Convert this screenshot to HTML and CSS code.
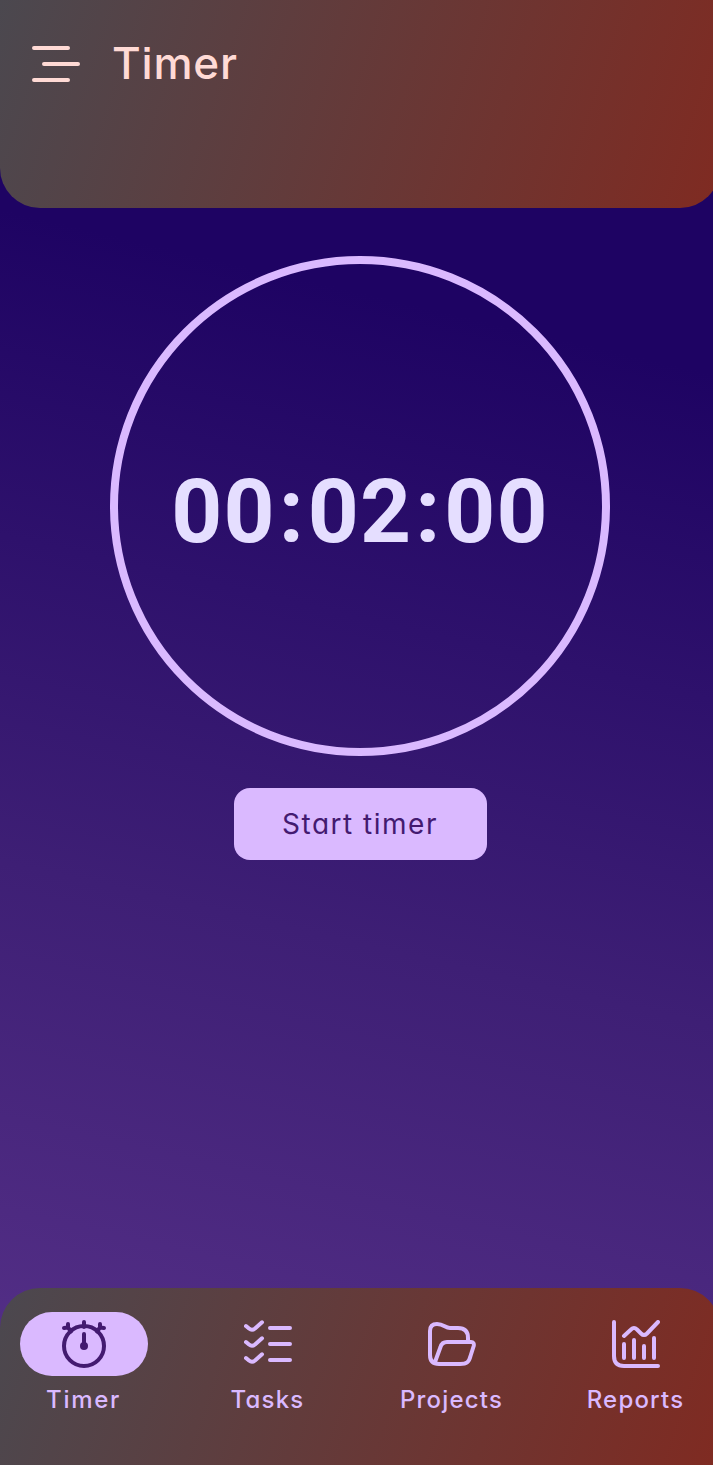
FILE: index.html
```html
<!DOCTYPE html>
<html lang="en">
<head>
<meta charset="utf-8">
<title>Timer</title>
<link rel="stylesheet" href="styles.css">
</head>
<body>
<div class="screen">
  <header class="header">
    <svg class="menu" width="48" height="48" viewBox="0 0 48 48"><path d="M2 8H36M12 24H46M2 40H36"/></svg>
    <h1 class="title">Timer</h1>
  </header>
  <main class="main">
    <div class="dial"><div class="time">00<span class="colon">:</span>02<span class="colon">:</span>00</div></div>
    <button class="start">Start timer</button>
  </main>
  <nav class="nav">
    <a class="item">
      <span class="pill active"><svg class="icon" viewBox="0 0 48 48"><circle cx="24" cy="26" r="20"/><path d="M24 2V7M24 14V26M4 8L8 7.500M8 4V7.500L11 11.500M44 8L40 7.500M40 4V7.500L37 11.500"/><circle class="dot" cx="24" cy="26" r="4"/></svg></span>
      <span class="label timer">Timer</span>
    </a>
    <a class="item">
      <span class="pill"><svg class="icon" viewBox="0 0 48 48"><path d="M26 8H46M26 24H46M26 40H46M2 6L5 8.500Q8 11 11 8.500L18 2.300M2 22L5 24.500Q8 27 11 24.500L18 18.300M2 38L5 40.500Q8 43 11 40.500L18 34.300"/></svg></span>
      <span class="label tasks">Tasks</span>
    </a>
    <a class="item">
      <span class="pill"><svg class="icon" viewBox="0 0 48 48"><path d="M40 22V18Q40 8 30 8H22C17 8 16 4 9 4Q2 4 2 11V35Q2 44 11 44H32C39 44 41 42 42.500 36L45.700 26Q46.500 22 43 22H19C15 22 13.500 23.500 12.500 27L7 42"/></svg></span>
      <span class="label projects">Projects</span>
    </a>
    <a class="item">
      <span class="pill"><svg class="icon" viewBox="0 0 48 48"><path d="M2 2V36Q2 46 12 46H46M12 24V38M22 20V38M32 26V38M42 18V38M12 16L19 9.500Q22 6.500 25 9.500L29 13.500Q32 16.500 35 13.500L46 2"/></svg></span>
      <span class="label reports">Reports</span>
    </a>
  </nav>
</div>
</body>
</html>
```
FILE: styles.css
```css
* { box-sizing: border-box; }
html, body { margin: 0; height: 1465px; overflow: hidden; }
body { font-family: "Inter", "Open Sans", sans-serif; font-feature-settings: "cv11", "ss07"; }
.screen {
  width: 720px;
  height: 1465px;
  display: flex;
  flex-direction: column;
  background: linear-gradient(193deg, #1e0363 23%, #3e1f75 63%, #58328a 100%);
}
.header {
  height: 208px;
  padding: 40px 32px;
  display: flex;
  align-items: flex-start;
  gap: 32px;
  border-radius: 0 0 40px 40px;
  background: linear-gradient(108deg, #4b484f 0%, #7f2b22 99%);
}
.menu, .icon { fill: none; stroke: currentColor; stroke-width: 4; stroke-linecap: round; stroke-linejoin: round; }
.menu { color: #ffdad5; }
.title { margin: 0; font-size: 44px; line-height: 47px; font-weight: 550; letter-spacing: 0.8px; color: #ffdad5; }
.main { flex: 1; display: flex; flex-direction: column; align-items: center; padding-top: 48px; }
.dial {
  width: 500px;
  height: 500px;
  display: flex;
  align-items: center;
  justify-content: center;
  border: 8px solid #dab9ff;
  border-radius: 50%;
}
.time { font: 700 89px/100px Roboto, sans-serif; letter-spacing: 1.1px; color: #e5deff; padding-top: 12px; }
.colon { padding: 0 3px; }
.start {
  width: 253px;
  height: 72px;
  margin-top: 32px;
  border: 0;
  border-radius: 16px;
  background: #dab9ff;
  color: #431a70;
  font: 400 28px/40px "Inter", sans-serif;
  font-feature-settings: "cv11", "ss07";
  letter-spacing: 1.5px;
}
.nav {
  height: 177px;
  padding: 24px 20px;
  display: flex;
  justify-content: space-between;
  align-items: flex-start;
  border-radius: 40px 40px 0 0;
  background: linear-gradient(108deg, #4b484f 0%, #7f2b22 99%);
  color: #dab9ff;
}
.item { width: 128px; display: flex; flex-direction: column; align-items: center; gap: 8px; }
.pill { width: 128px; height: 64px; border-radius: 32px; display: flex; align-items: center; justify-content: center; }
.active { background: #dab9ff; color: #431a70; }
.icon { width: 48px; height: 48px; }
.dot { fill: currentColor; stroke: none; }
.label { margin-right: 1px; font-size: 24px; line-height: 32px; font-weight: 500; letter-spacing: 1.2px; white-space: nowrap; }
.timer { letter-spacing: 1.7px; }
```
